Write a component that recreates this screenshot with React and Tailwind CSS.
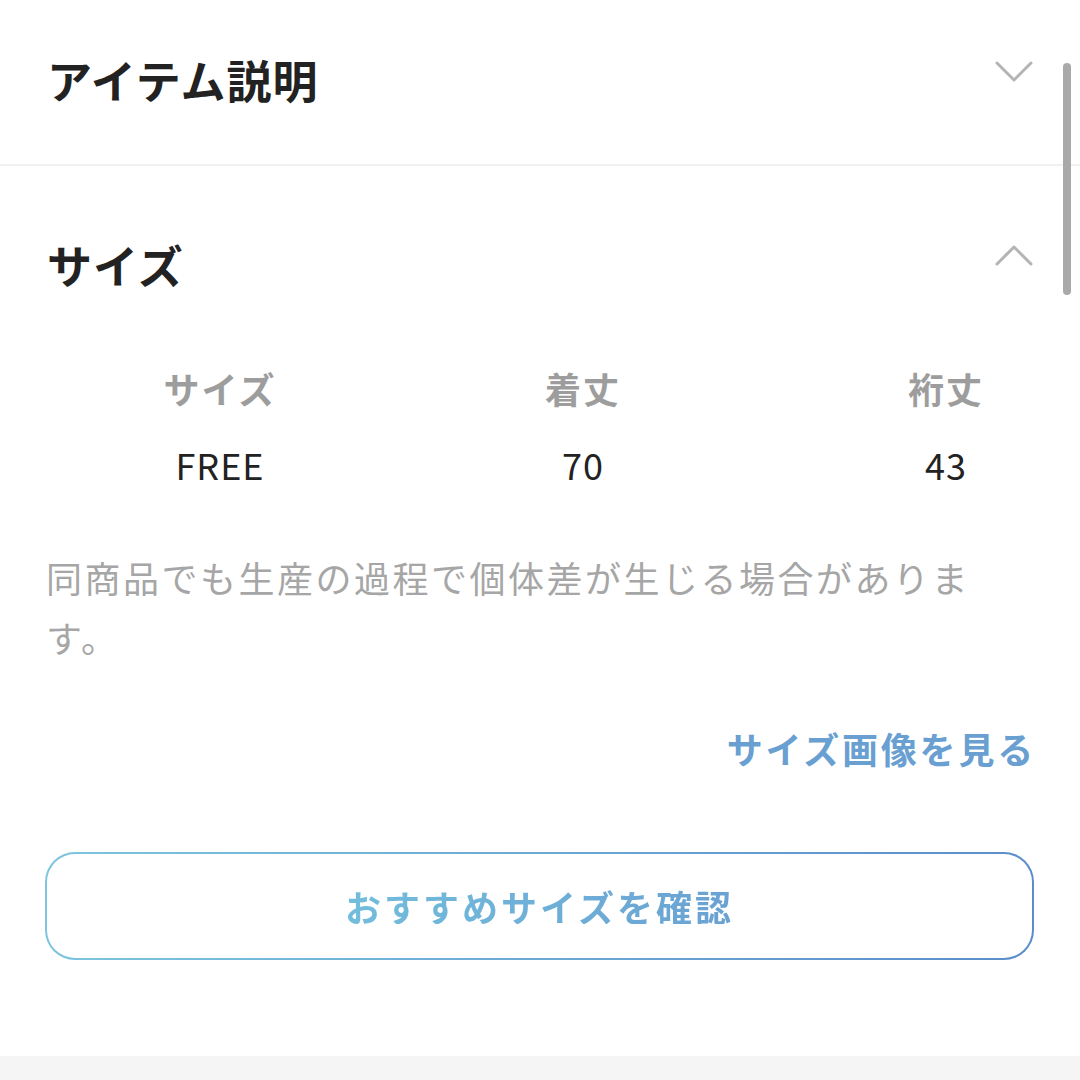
import React from "react";

const FONT = { fontFamily: '"Noto Sans CJK JP", "Noto Sans", sans-serif' };

function Chevron({ up = false }) {
  return (
    <svg width="38" height="22" viewBox="0 0 38 22" fill="none" className="block">
      <polyline
        points={up ? "2,20 19,3 36,20" : "2,2 19,19 36,2"}
        stroke="#b4b4b4"
        strokeWidth="3"
        strokeLinecap="round"
        strokeLinejoin="round"
      />
    </svg>
  );
}

function SizeTable({ headers, values }) {
  return (
    <div className="pl-[100px] pr-[14px]">
      <div className="flex justify-between">
        {headers.map((h) => (
          <div key={h} className="w-[240px] text-center text-[36px] leading-none font-bold text-[#9d9d9d] tracking-[2px]">{h}</div>
        ))}
      </div>
      <div className="flex justify-between mt-[40px]">
        {values.map((v, i) => (
          <div key={i} className="w-[240px] text-center text-[36px] leading-none text-[#222] tracking-[1px]">{v}</div>
        ))}
      </div>
    </div>
  );
}

export default function App() {
  return (
    <div className="relative w-[1080px] h-[1080px] overflow-hidden bg-white" style={FONT}>
      {/* アイテム説明 (collapsed) */}
      <div className="h-[166px] border-b-2 border-[#f1f1f1] flex justify-between pl-[47px] pr-[47px]">
        <h2 className="self-center pb-[5px] text-[45px] leading-none font-bold text-[#222] tracking-[1px]">アイテム説明</h2>
        <div className="mt-[61px]"><Chevron /></div>
      </div>

      {/* サイズ (expanded) */}
      <div className="flex justify-between pl-[47px] pr-[47px] pt-[76px]">
        <h2 className="text-[45px] leading-none font-bold text-[#222] tracking-[1px]">サイズ</h2>
        <div className="mt-[2px]"><Chevron up /></div>
      </div>

      <div className="mt-[83px]">
        <SizeTable headers={["サイズ", "着丈", "裄丈"]} values={["FREE", "70", "43"]} />
      </div>

      <div className="px-[46px]">
        <p className="mt-[65px] text-[36px] leading-[60px] text-[#a6a6a6] tracking-[2.5px]">
          同商品でも生産の過程で個体差が生じる場合があります。
        </p>

        <div className="mt-[63px] flex justify-end -mr-[2px]">
          <a className="text-[36px] leading-none font-bold text-[#6a9fd2] tracking-[2.8px]">サイズ画像を見る</a>
        </div>

        <div className="mt-[86px] ml-[-1px] rounded-[30px] p-[2px] bg-linear-to-r from-[#7dc5de] to-[#5b8dca]">
          <div className="h-[104px] rounded-[28px] bg-white flex items-center justify-center">
            <span className="text-[36px] leading-none font-bold tracking-[3px] bg-linear-to-r from-[#72bddc] to-[#6aa2d3] bg-clip-text text-transparent">
              おすすめサイズを確認
            </span>
          </div>
        </div>
      </div>

      <div className="mt-[96px] h-[60px] bg-[#f5f5f5]" />

      {/* scroll indicator */}
      <div className="absolute right-[9px] top-[63px] w-[8px] h-[232px] rounded-full bg-[#a9a9a9]" />
    </div>
  );
}
